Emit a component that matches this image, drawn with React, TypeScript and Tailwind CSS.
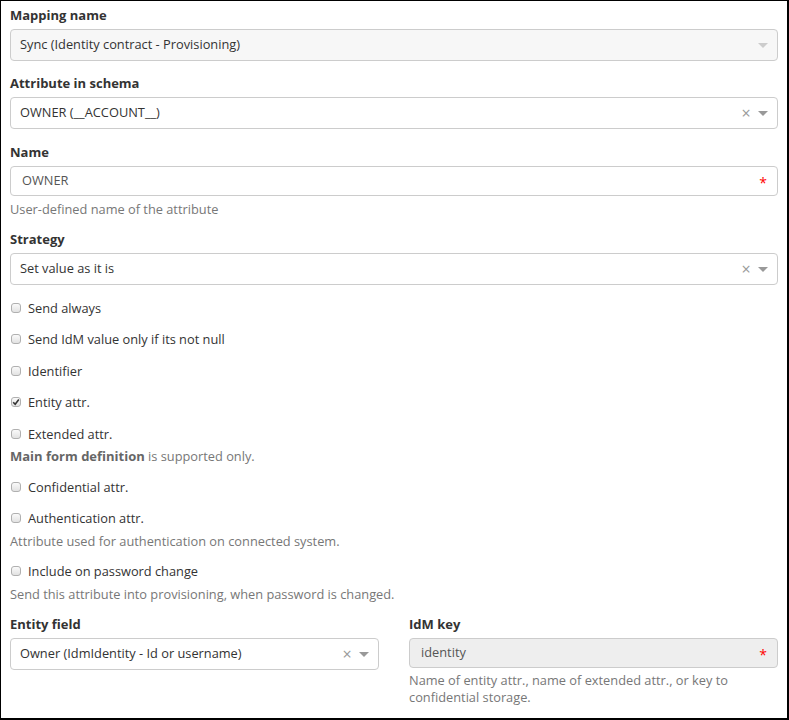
import React from "react";

function Caret({ light }: { light?: boolean }) {
  return (
    <span
      className={`inline-block w-0 h-0 border-x-[5px] border-x-transparent border-t-[5px] ${
        light ? "border-t-[#ccc]" : "border-t-[#999]"
      }`}
    />
  );
}

function Select({
  value,
  disabled,
  clearable,
}: {
  value: string;
  disabled?: boolean;
  clearable?: boolean;
}) {
  return (
    <div
      className={`h-[32px] border border-[#ccc] rounded-[4px] flex items-center pl-[9px] pr-[9px] ${
        disabled ? "bg-[#f7f7f7]" : "bg-white"
      }`}
    >
      <span className="flex-1 truncate text-[#333]">{value}</span>
      {clearable && (
        <span className="text-[#999] text-[16px] leading-none mr-[7px] w-[10px] text-center">
          ×
        </span>
      )}
      <Caret light={disabled} />
    </div>
  );
}

function Input({ value, disabled }: { value: string; disabled?: boolean }) {
  return (
    <div
      className={`h-[30px] border border-[#ccc] rounded-[4px] flex items-center pl-[11px] pr-[10px] ${
        disabled ? "bg-[#eee]" : "bg-white"
      }`}
    >
      <span className="flex-1 truncate text-[#555]">{value}</span>
      <span className="text-[#f00] text-[14px] leading-none mt-[4px]">*</span>
    </div>
  );
}

function Label({ children, className = "" }: { children: React.ReactNode; className?: string }) {
  return (
    <div className={`h-[18px] leading-[18px] text-[13px] font-bold text-[#333] ${className}`}>
      {children}
    </div>
  );
}

function Help({ children, className = "" }: { children: React.ReactNode; className?: string }) {
  return <div className={`leading-[18px] text-[#777] ${className}`}>{children}</div>;
}

function Check({
  label,
  checked,
  className = "",
}: {
  label: string;
  checked?: boolean;
  className?: string;
}) {
  return (
    <div className={`h-[18px] flex items-center ${className}`}>
      <span className="ml-[1px] w-[10px] h-[10px] rounded-[3px] border border-[#b0b0b0] bg-gradient-to-b from-[#fafafa] to-[#e2e2e2] flex items-center justify-center">
        {checked && (
          <svg width="8" height="8" viewBox="0 0 8 8">
            <path d="M1.2 4.2 L3.2 6.2 L6.8 1.6" fill="none" stroke="#333" strokeWidth="1.6" />
          </svg>
        )}
      </span>
      <span className="ml-[7px] text-[#333] leading-[18px]">{label}</span>
    </div>
  );
}

export default function App() {
  return (
    <div
      className="w-[789px] h-[720px] bg-white border-l border-t border-r-2 border-b-2 border-black px-[9px] pt-[5px] text-[12.8px]"
      style={{ fontFamily: '"Open Sans", "Noto Sans", sans-serif' }}
    >
      <div className="flex flex-col">
        <Label>Mapping name</Label>
        <div className="mt-[5px]">
          <Select value="Sync (Identity contract - Provisioning)" disabled />
        </div>

        <Label className="mt-[13px]">Attribute in schema</Label>
        <div className="mt-[5px]">
          <Select value="OWNER (__ACCOUNT__)" clearable />
        </div>

        <Label className="mt-[14px]">Name</Label>
        <div className="mt-[5px]">
          <Input value="OWNER" />
        </div>
        <Help className="mt-[4px]">User-defined name of the attribute</Help>

        <Label className="mt-[12px]">Strategy</Label>
        <div className="mt-[5px]">
          <Select value="Set value as it is" clearable />
        </div>

        <Check className="mt-[14px]" label="Send always" />
        <Check className="mt-[13px]" label="Send IdM value only if its not null" />
        <Check className="mt-[14px]" label="Identifier" />
        <Check className="mt-[13px]" label="Entity attr." checked />
        <Check className="mt-[14px]" label="Extended attr." />
        <Help className="mt-[4px]">
          <span className="font-bold text-[13px] text-[#666]">Main form definition</span> is supported only.
        </Help>
        <Check className="mt-[13px]" label="Confidential attr." />
        <Check className="mt-[13px]" label="Authentication attr." />
        <Help className="mt-[5px]">Attribute used for authentication on connected system.</Help>
        <Check className="mt-[12px]" label="Include on password change" />
        <Help className="mt-[5px]">Send this attribute into provisioning, when password is changed.</Help>

        <div className="grid grid-cols-2 gap-x-[30px] mt-[12px]">
          <div className="flex flex-col">
            <Label>Entity field</Label>
            <div className="mt-[5px]">
              <Select value="Owner (IdmIdentity - Id or username)" clearable />
            </div>
          </div>
          <div className="flex flex-col">
            <Label>IdM key</Label>
            <div className="mt-[5px]">
              <Input value="identity" disabled />
            </div>
            <div className="mt-[4px] leading-[17px] text-[#777]">
              Name of entity attr., name of extended attr., or key to confidential storage.
            </div>
          </div>
        </div>
      </div>
    </div>
  );
}
